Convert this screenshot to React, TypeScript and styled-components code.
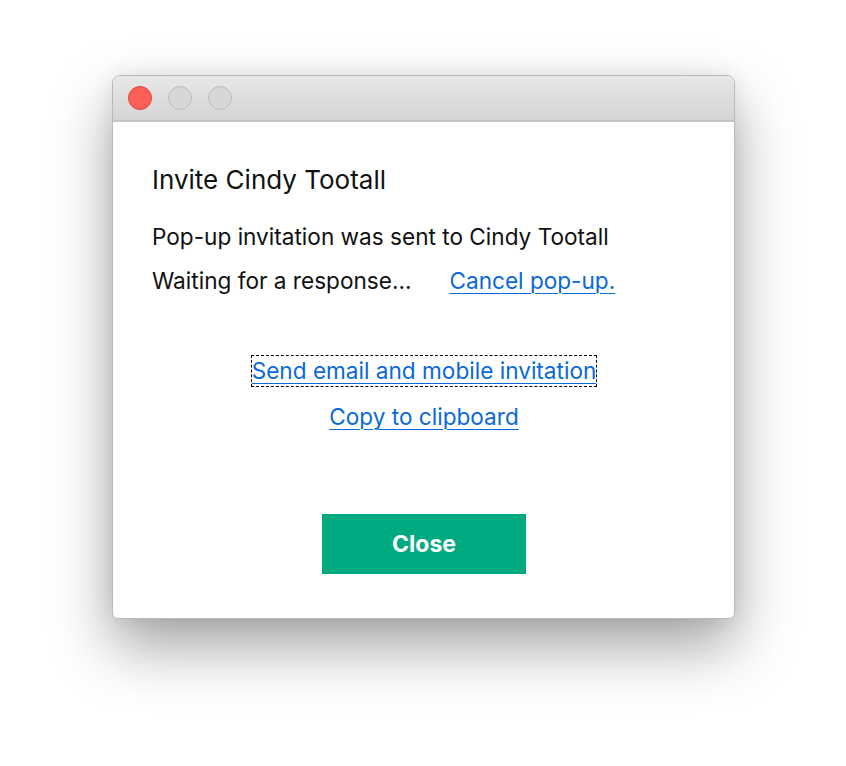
import React from "react";
import styled, { createGlobalStyle } from "styled-components";

const Global = createGlobalStyle`
  html, body { margin: 0; padding: 0; background: #ffffff; }
  body { font-family: Inter, "Helvetica Neue", "Liberation Sans", Arial, sans-serif; }
`;

const Stage = styled.div`
  width: 846px;
  height: 766px;
  padding: 75px 0 0 112px;
  box-sizing: border-box;
`;

const Window = styled.div`
  width: 623px;
  height: 544px;
  box-sizing: border-box;
  border: 1px solid #b9b9b9;
  border-radius: 8px 8px 6px 6px;
  background: #ffffff;
  overflow: hidden;
  display: flex;
  flex-direction: column;
  box-shadow: 0 28px 60px rgba(0, 0, 0, 0.36), 0 0 20px rgba(0, 0, 0, 0.08);
`;

const TitleBar = styled.div`
  height: 44px;
  flex: 0 0 auto;
  background: linear-gradient(#e8e8e8, #d4d4d4);
  border-bottom: 2px solid #c4c4c4;
  display: flex;
  align-items: center;
  gap: 16px;
  padding-left: 15px;
`;

const Light = styled.span<{ $red?: boolean }>`
  width: 24px;
  height: 24px;
  border-radius: 50%;
  box-sizing: border-box;
  background: ${(p) => (p.$red ? "#fe5f57" : "#d6d6d6")};
  border: 1px solid ${(p) => (p.$red ? "#e0443e" : "#bdbdbd")};
`;

const Body = styled.div`
  flex: 1;
  display: flex;
  flex-direction: column;
  padding: 41px 38px 0 39px;
`;

const Title = styled.h1`
  margin: 0;
  font-size: 26px;
  font-weight: 400;
  color: #111;
  line-height: 34px;
`;

const Line = styled.p`
  margin: 0;
  font-size: 22.6px;
  color: #111;
  line-height: 30px;
  display: flex;
  gap: 38px;
`;

const Link = styled.a<{ $focus?: boolean }>`
  color: #0a69d8;
  text-decoration: underline;
  text-underline-offset: 4px;
  text-decoration-thickness: 1px;
  cursor: pointer;
  ${(p) => (p.$focus ? "outline: 1px dashed #000; outline-offset: 0px;" : "")}
`;

const Lines = styled.div`
  display: flex;
  flex-direction: column;
  gap: 14px;
  margin-top: 25px;
`;

const Center = styled.div`
  display: flex;
  flex-direction: column;
  align-items: center;
  gap: 16px;
  margin-top: 60px;
  font-size: 22.6px;
  line-height: 30px;
`;

const CloseButton = styled.button`
  align-self: center;
  margin-top: 82px;
  width: 204px;
  height: 60px;
  border: none;
  background: #00aa80;
  color: #fff;
  font-family: inherit;
  font-size: 23px;
  font-weight: 700;
  cursor: pointer;
`;

export default function App() {
  return (
    <>
      <Global />
      <Stage>
        <Window>
          <TitleBar>
            <Light $red />
            <Light />
            <Light />
          </TitleBar>
          <Body>
            <Title>Invite Cindy Tootall</Title>
            <Lines>
              <Line>Pop-up invitation was sent to Cindy Tootall</Line>
              <Line>
                <span>Waiting for a response...</span>
                <Link>Cancel pop-up.</Link>
              </Line>
            </Lines>
            <Center>
              <Link $focus>Send email and mobile invitation</Link>
              <Link>Copy to clipboard</Link>
            </Center>
            <CloseButton>Close</CloseButton>
          </Body>
        </Window>
      </Stage>
    </>
  );
}
